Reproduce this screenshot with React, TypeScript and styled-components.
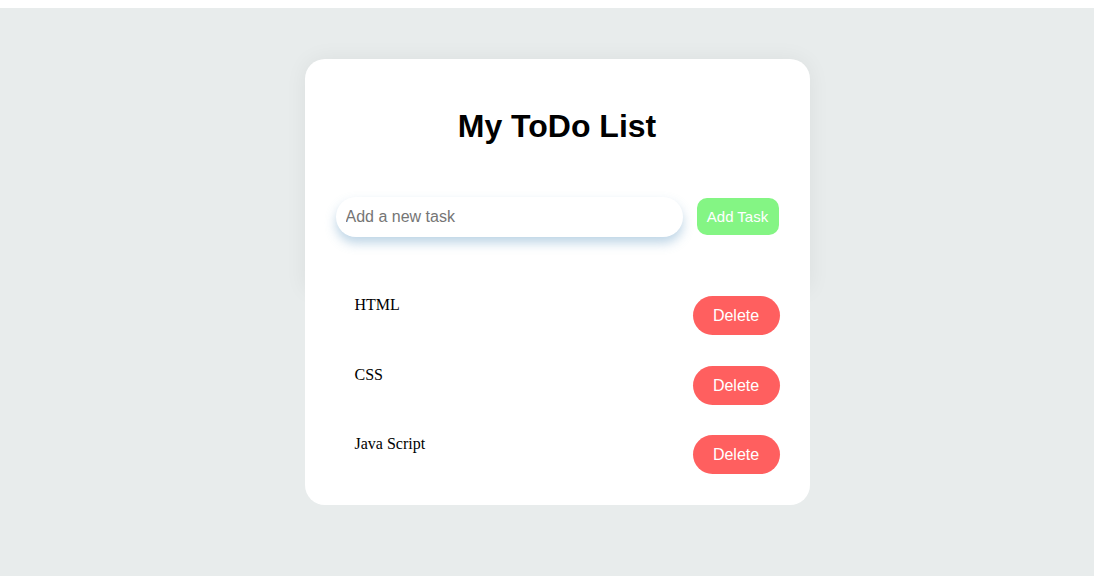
import React from "react";
import styled, { createGlobalStyle } from "styled-components";

const Global = createGlobalStyle`
  html { background: #ffffff; }
  body {
    margin: 8px 0 0 0;
    font-family: "Liberation Serif", "Times New Roman", serif;
  }
  * { box-sizing: border-box; }
`;

const Page = styled.div`
  min-height: calc(100vh - 8px);
  background: #e8ecec;
  padding: 51px 0 0 20px;
`;

const Card = styled.div`
  width: 505px;
  margin: 0 auto;
  display: flex;
  flex-direction: column;
`;

const Header = styled.div`
  background: #ffffff;
  border-radius: 20px 20px 0 0;
  box-shadow: 0 0 22px rgba(0, 0, 0, 0.06);
  padding: 49px 31px 53px 31px;
  display: flex;
  flex-direction: column;
`;

const Title = styled.h1`
  margin: 0 0 52px 0;
  text-align: center;
  font-family: "Liberation Sans", Arial, sans-serif;
  font-weight: 700;
  font-size: 32px;
  line-height: 37px;
  color: #000000;
`;

const InputRow = styled.div`
  display: flex;
  align-items: center;
  gap: 14px;
`;

const TaskInput = styled.input`
  width: 347px;
  height: 40px;
  border: none;
  outline: none;
  border-radius: 20px;
  padding: 0 10px;
  font-family: "Liberation Sans", Arial, sans-serif;
  font-size: 16px;
  color: #333;
  background: #ffffff;
  box-shadow: 0 6px 11px rgba(100, 155, 195, 0.42);
  &::placeholder { color: #757575; }
`;

const AddButton = styled.button`
  margin-top: -1px;
  border: none;
  border-radius: 10px;
  background: #84f584;
  color: #ffffff;
  font-family: "Liberation Sans", Arial, sans-serif;
  font-size: 15px;
  line-height: 17px;
  padding: 10px 10px;
  width: 82px;
  cursor: pointer;
`;

const List = styled.ul`
  list-style: none;
  margin: 0;
  background: #ffffff;
  border-radius: 0 0 20px 20px;
  padding: 5px 30px 31px 30px;
  display: flex;
  flex-direction: column;
  gap: 29.5px;
`;

const Item = styled.li`
  display: flex;
  justify-content: space-between;
  align-items: flex-start;
  padding-left: 20px;
  height: 40px;
`;

const ItemText = styled.span`
  padding-top: 1px;
  font-family: "Liberation Serif", "Times New Roman", serif;
  font-size: 16px;
  line-height: 18px;
  color: #000000;
`;

const DeleteButton = styled.button`
  margin-top: 1px;
  border: none;
  border-radius: 20px;
  background: #ff5f5f;
  color: #ffffff;
  font-family: "Liberation Sans", Arial, sans-serif;
  font-size: 16px;
  line-height: 19px;
  padding: 10px 20px;
  width: 87px;
  cursor: pointer;
`;

const tasks = ["HTML", "CSS", "Java Script"];

export default function App() {
  return (
    <>
      <Global />
      <Page>
        <Card>
          <Header>
            <Title>My ToDo List</Title>
            <InputRow>
              <TaskInput placeholder="Add a new task" />
              <AddButton>Add Task</AddButton>
            </InputRow>
          </Header>
          <List>
            {tasks.map((t) => (
              <Item key={t}>
                <ItemText>{t}</ItemText>
                <DeleteButton>Delete</DeleteButton>
              </Item>
            ))}
          </List>
        </Card>
      </Page>
    </>
  );
}
